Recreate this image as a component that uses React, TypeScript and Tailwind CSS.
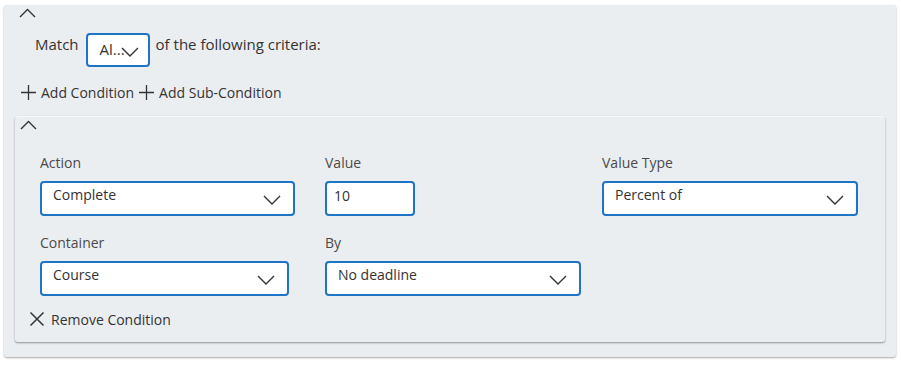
const font = { fontFamily: '"Open Sans", "Noto Sans", sans-serif' }

const ChevronDown = ({ className = "" }: { className?: string }) => (
  <svg width="18" height="10" viewBox="0 0 18 10" className={className} fill="none">
    <path d="M1 1 L9 9 L17 1" stroke="#333" strokeWidth="1.4" />
  </svg>
)

const ChevronUp = ({ className = "" }: { className?: string }) => (
  <svg width="17" height="10" viewBox="0 0 17 10" className={className} fill="none">
    <path d="M1 9 L8.5 1.5 L16 9" stroke="#333" strokeWidth="1.4" />
  </svg>
)

const Plus = () => (
  <svg width="17" height="17" viewBox="0 0 17 17" fill="none">
    <path d="M8.5 1 V16 M1 8.5 H16" stroke="#333" strokeWidth="1.3" />
  </svg>
)

const Cross = () => (
  <svg width="16" height="16" viewBox="0 0 16 16" fill="none">
    <path d="M1.5 1.5 L14.5 14.5 M14.5 1.5 L1.5 14.5" stroke="#333" strokeWidth="1.5" />
  </svg>
)

const Select = ({ value, width }: { value: string; width: string }) => (
  <div className={`${width} h-[35px] bg-white border-2 border-[#1f74c7] rounded-[4px] flex items-start justify-between pl-[11px] pr-[12px]`}>
    <span className="text-[14px] leading-[20px] mt-[2px] text-[#333]">{value}</span>
    <ChevronDown className="mt-[12px]" />
  </div>
)

const Field = ({ label, children }: { label: string; children: React.ReactNode }) => (
  <div className="flex flex-col">
    <span className="text-[14px] leading-[20px] text-[#4a4a4a] mb-[8px]">{label}</span>
    {children}
  </div>
)

export default function App() {
  return (
    <div className="w-[901px] h-[365px] bg-white pt-[5px] pl-[4px]" style={font}>
      <div className="w-[892px] h-[352px] bg-[#ebeef1] rounded-[3px] shadow-[0_1px_2px_rgba(0,0,0,0.35)] flex flex-col">
        <div className="pl-[15px] pt-[3px] h-[20px]">
          <ChevronUp />
        </div>
        <div className="flex items-start pl-[31px] mt-[8px] text-[15px] text-[#333]">
          <span className="leading-[20px] mt-[1px] mr-[7px]">Match</span>
          <div className="w-[64px] h-[34px] bg-white border-2 border-[#1f74c7] rounded-[4px] flex items-start pl-[12px]">
            <span className="leading-[20px] mt-[4px]">Al...</span>
            <ChevronDown className="mt-[12px] -ml-[4px]" />
          </div>
          <span className="leading-[20px] mt-[1px] ml-[6px]">of the following criteria:</span>
        </div>
        <div className="flex items-center pl-[16px] mt-[14px] text-[14px] text-[#333]">
          <Plus />
          <span className="ml-[4px] mr-[4px] leading-[20px] mt-[2px]">Add Condition</span>
          <Plus />
          <span className="ml-[4px] leading-[20px] mt-[2px]">Add Sub-Condition</span>
        </div>
        <div className="ml-[11px] mt-[13px] w-[870px] h-[226px] bg-[#ebeef1] rounded-[3px] shadow-[0_1px_2px_rgba(0,0,0,0.4)] border-t border-[#f4f6f8] flex flex-col">
          <div className="pl-[5px] pt-[3px] h-[20px]">
            <ChevronUp />
          </div>
          <div className="flex pl-[25px] mt-[16px]">
            <div className="w-[285px]">
              <Field label="Action">
                <Select value="Complete" width="w-[255px]" />
              </Field>
            </div>
            <div className="w-[277px]">
              <Field label="Value">
                <div className="w-[90px] h-[35px] bg-white border-2 border-[#1f74c7] rounded-[4px] pl-[7px]">
                  <span className="text-[14px] leading-[20px] text-[#333] block mt-[3px]">10</span>
                </div>
              </Field>
            </div>
            <Field label="Value Type">
              <Select value="Percent of" width="w-[256px]" />
            </Field>
          </div>
          <div className="flex pl-[25px] mt-[17px]">
            <div className="w-[285px]">
              <Field label="Container">
                <Select value="Course" width="w-[249px]" />
              </Field>
            </div>
            <Field label="By">
              <Select value="No deadline" width="w-[256px]" />
            </Field>
          </div>
          <div className="flex items-center pl-[14px] mt-[12px] text-[14px] text-[#333]">
            <Cross />
            <span className="ml-[6px] leading-[20px] mt-[2px]">Remove Condition</span>
          </div>
        </div>
      </div>
    </div>
  )
}
